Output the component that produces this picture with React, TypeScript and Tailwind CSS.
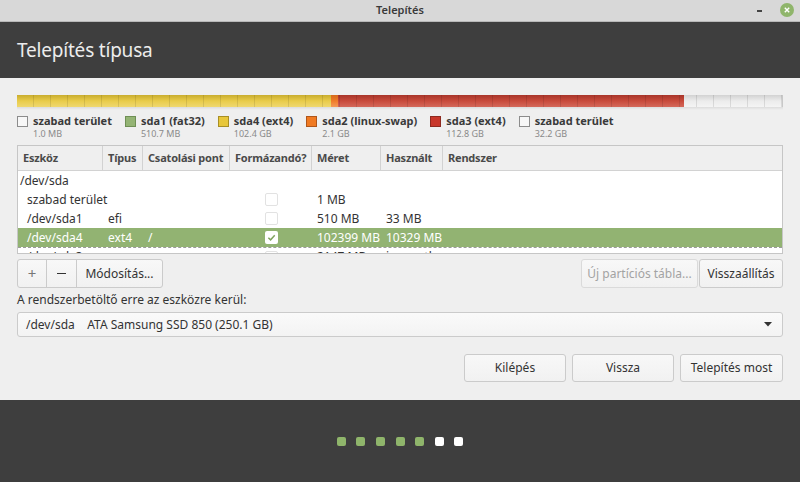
const legend = [
  { name: 'szabad terület', size: '1.0 MB', box: 'bg-[#f7f7f7] border-[#8c8c8c]' },
  { name: 'sda1 (fat32)', size: '510.7 MB', box: 'bg-[#94b474] border-[#6f8f55]' },
  { name: 'sda4 (ext4)', size: '102.4 GB', box: 'bg-[#e8c73a] border-[#a88f25]' },
  { name: 'sda2 (linux-swap)', size: '2.1 GB', box: 'bg-[#f07a22] border-[#b0561a]' },
  { name: 'sda3 (ext4)', size: '112.8 GB', box: 'bg-[#c8372b] border-[#8e2a20]' },
  { name: 'szabad terület', size: '32.2 GB', box: 'bg-[#f7f7f7] border-[#8c8c8c]' },
]

const cols = 'grid grid-cols-[85px_40px_87px_82px_69px_62px_1fr]'

const rows = [
  { dev: '/dev/sda', type: '', mount: '', fmt: null, size: '', used: '', sys: '', top: true },
  { dev: 'szabad terület', type: '', mount: '', fmt: false, size: '1 MB', used: '', sys: '' },
  { dev: '/dev/sda1', type: 'efi', mount: '', fmt: false, size: '510 MB', used: '33 MB', sys: '' },
  { dev: '/dev/sda4', type: 'ext4', mount: '/', fmt: true, size: '102399 MB', used: '10329 MB', sys: '', sel: true },
  { dev: '/dev/sda3', type: 'swap', mount: '', fmt: false, size: '2147 MB', used: 'ismeretlen', sys: '' },
]

function Check({ on, sel }: { on: boolean; sel?: boolean }) {
  if (on)
    return (
      <div className="w-[13px] h-[13px] rounded-[2px] bg-white flex items-center justify-center">
        <svg width="9" height="9" viewBox="0 0 10 10">
          <path d="M1.5 5.2 L4 7.6 L8.6 2.4" fill="none" stroke={sel ? '#7fa35e' : '#555'} strokeWidth="1.6" />
        </svg>
      </div>
    )
  return <div className="w-[13px] h-[13px] rounded-[2px] border border-[#e2e2e2] bg-white" />
}

function Btn({ children, className = '', disabled }: { children: React.ReactNode; className?: string; disabled?: boolean }) {
  return (
    <div
      className={`flex items-center justify-center border border-[#cbcbcb] rounded-[3px] text-[12px] bg-gradient-to-b from-[#f8f8f8] to-[#f1f1f1] ${
        disabled ? 'text-[#a3a3a3] border-[#dadada]' : 'text-[#333]'
      } ${className}`}
    >
      {children}
    </div>
  )
}

export default function App() {
  return (
    <div className="w-[800px] h-[482px] flex flex-col overflow-hidden font-['Noto_Sans',sans-serif] bg-[#efefef]">
      {/* title bar */}
      <div className="h-[22px] relative flex items-center justify-center bg-[#d8d8d8] border-b border-[#b8b8b8]">
        <span className="text-[11px] font-semibold text-[#3a3a3a]">Telepítés</span>
        <div className="absolute left-[757px] top-[10px] w-[5px] h-[2px] bg-[#444]" />
        <div className="absolute left-[780px] top-[3px] w-[14px] h-[14px] rounded-full bg-[#8fb56b] flex items-center justify-center">
          <svg width="6" height="6" viewBox="0 0 6 6">
            <path d="M0.8 0.8 L5.2 5.2 M5.2 0.8 L0.8 5.2" stroke="#fff" strokeWidth="1.4" />
          </svg>
        </div>
      </div>

      {/* header */}
      <div className="h-[56px] bg-[#3e3e3e] flex items-center px-[17px]">
        <h1 className="text-[19px] text-[#ececec] tracking-[-0.2px]">Telepítés típusa</h1>
      </div>

      {/* main */}
      <div className="flex-1 px-[17px] pt-[17px] flex flex-col">
        {/* partition bar */}
        <div className="relative h-[12px] flex">
          <div className="w-[314px] bg-gradient-to-b from-[#c9ad2e] via-[#e9cc4a] to-[#efd86e]" />
          <div className="w-[7px] bg-gradient-to-b from-[#d66a1c] via-[#f07c28] to-[#f49a55]" />
          <div className="w-[346px] bg-gradient-to-b from-[#a8352a] via-[#c84a3b] to-[#d4685a]" />
          <div className="flex-1 bg-gradient-to-b from-[#d2d2d2] via-[#ececec] to-[#f4f4f4] border-r border-[#c8c8c8]" />
          <div className="absolute inset-0 bg-[repeating-linear-gradient(90deg,transparent_0,transparent_16px,rgba(0,0,0,0.1)_16px,rgba(0,0,0,0.1)_17px)]" />
          <div className="absolute left-0 right-0 top-[12px] h-[3px] bg-gradient-to-b from-[rgba(0,0,0,0.08)] to-transparent" />
        </div>

        {/* legend */}
        <div className="mt-[7px] flex">
          {legend.map((l, i) => (
            <div key={i} className="flex items-start mr-[13px]">
              <div className={`mt-[2px] w-[11px] h-[11px] border ${l.box}`} />
              <div className="ml-[5px] flex flex-col">
                <span className="text-[11px] leading-[14px] font-bold text-[#3a3a3a]">{l.name}</span>
                <span className="text-[9px] leading-[12px] text-[#8a8a8a]">{l.size}</span>
              </div>
            </div>
          ))}
        </div>

        {/* table */}
        <div className="mt-[5px] h-[109px] border border-[#c6c6c6] bg-white overflow-hidden">
          <div className={`${cols} h-[25px] bg-[#efefef] border-b border-[#d2d2d2] text-[11px] font-bold text-[#4a4a4a]`}>
            {['Eszköz', 'Típus', 'Csatolási pont', 'Formázandó?', 'Méret', 'Használt', 'Rendszer'].map((h, i) => (
              <div
                key={h}
                className={`flex items-center px-[5px] whitespace-nowrap tracking-[-0.2px] ${i < 6 ? 'border-r border-[#d2d2d2]' : ''}`}
              >
                {h}
              </div>
            ))}
          </div>
          {rows.map((r, i) => (
            <div
              key={i}
              className={`${cols} h-[19px] text-[12px] ${r.sel ? 'bg-[#92b372] text-white' : 'text-[#333]'} ${
                i === 4 ? 'border-t border-dashed border-[#9a9a9a]' : ''
              }`}
            >
              <div className={`flex items-center whitespace-nowrap ${r.top ? 'pl-[2px]' : 'pl-[9px]'}`}>{r.dev}</div>
              <div className="flex items-center px-[5px]">{r.type}</div>
              <div className="flex items-center px-[5px]">{r.mount}</div>
              <div className="flex items-center justify-center">
                {r.fmt !== null && <Check on={r.fmt} sel={r.sel} />}
              </div>
              <div className="flex items-center px-[5px] whitespace-nowrap">{r.size}</div>
              <div className="flex items-center px-[5px] whitespace-nowrap">{r.used}</div>
              <div className="flex items-center px-[5px]">{r.sys}</div>
            </div>
          ))}
        </div>

        {/* table buttons */}
        <div className="mt-[5px] h-[29px] flex">
          <div className="flex border border-[#cbcbcb] rounded-[3px] bg-gradient-to-b from-[#f8f8f8] to-[#f1f1f1] text-[#333]">
            <div className="w-[29px] flex items-center justify-center border-r border-[#cbcbcb] text-[15px] text-[#777]">+</div>
            <div className="w-[30px] flex items-center justify-center border-r border-[#cbcbcb]">
              <div className="w-[9px] h-[1.5px] bg-[#333]" />
            </div>
            <div className="w-[85px] flex items-center justify-center text-[12px]">Módosítás...</div>
          </div>
          <div className="flex-1" />
          <Btn disabled className="w-[117px]">Új partíciós tábla...</Btn>
          <Btn className="w-[84px] ml-[1px]">Visszaállítás</Btn>
        </div>

        <div className="mt-[4px] h-[16px] text-[12px] leading-[16px] text-[#333]">A rendszerbetöltő erre az eszközre kerül:</div>

        {/* combo */}
        <div className="mt-[4px] h-[25px] border border-[#cbcbcb] rounded-[3px] bg-gradient-to-b from-[#fafafa] to-[#f3f3f3] flex items-center pl-[8px] pr-[10px] text-[12px] text-[#333]">
          <span className="whitespace-pre">/dev/sda    ATA Samsung SSD 850 (250.1 GB)</span>
          <div className="flex-1" />
          <svg width="8" height="5" viewBox="0 0 8 5">
            <path d="M0 0 H8 L4 4.5 Z" fill="#333" />
          </svg>
        </div>

        {/* bottom buttons */}
        <div className="mt-[17px] h-[28px] flex justify-end gap-[6px]">
          <Btn className="w-[102px]">Kilépés</Btn>
          <Btn className="w-[102px]">Vissza</Btn>
          <Btn className="w-[103px]">Telepítés most</Btn>
        </div>
      </div>

      {/* footer */}
      <div className="h-[82px] bg-[#3e3e3e] flex items-center justify-center gap-[10.6px]">
        {[0, 1, 2, 3, 4, 5, 6].map(i => (
          <div key={i} className={`w-[9px] h-[9px] rounded-[2px] ${i < 5 ? 'bg-[#8fb56b]' : 'bg-white'}`} />
        ))}
      </div>
    </div>
  )
}
